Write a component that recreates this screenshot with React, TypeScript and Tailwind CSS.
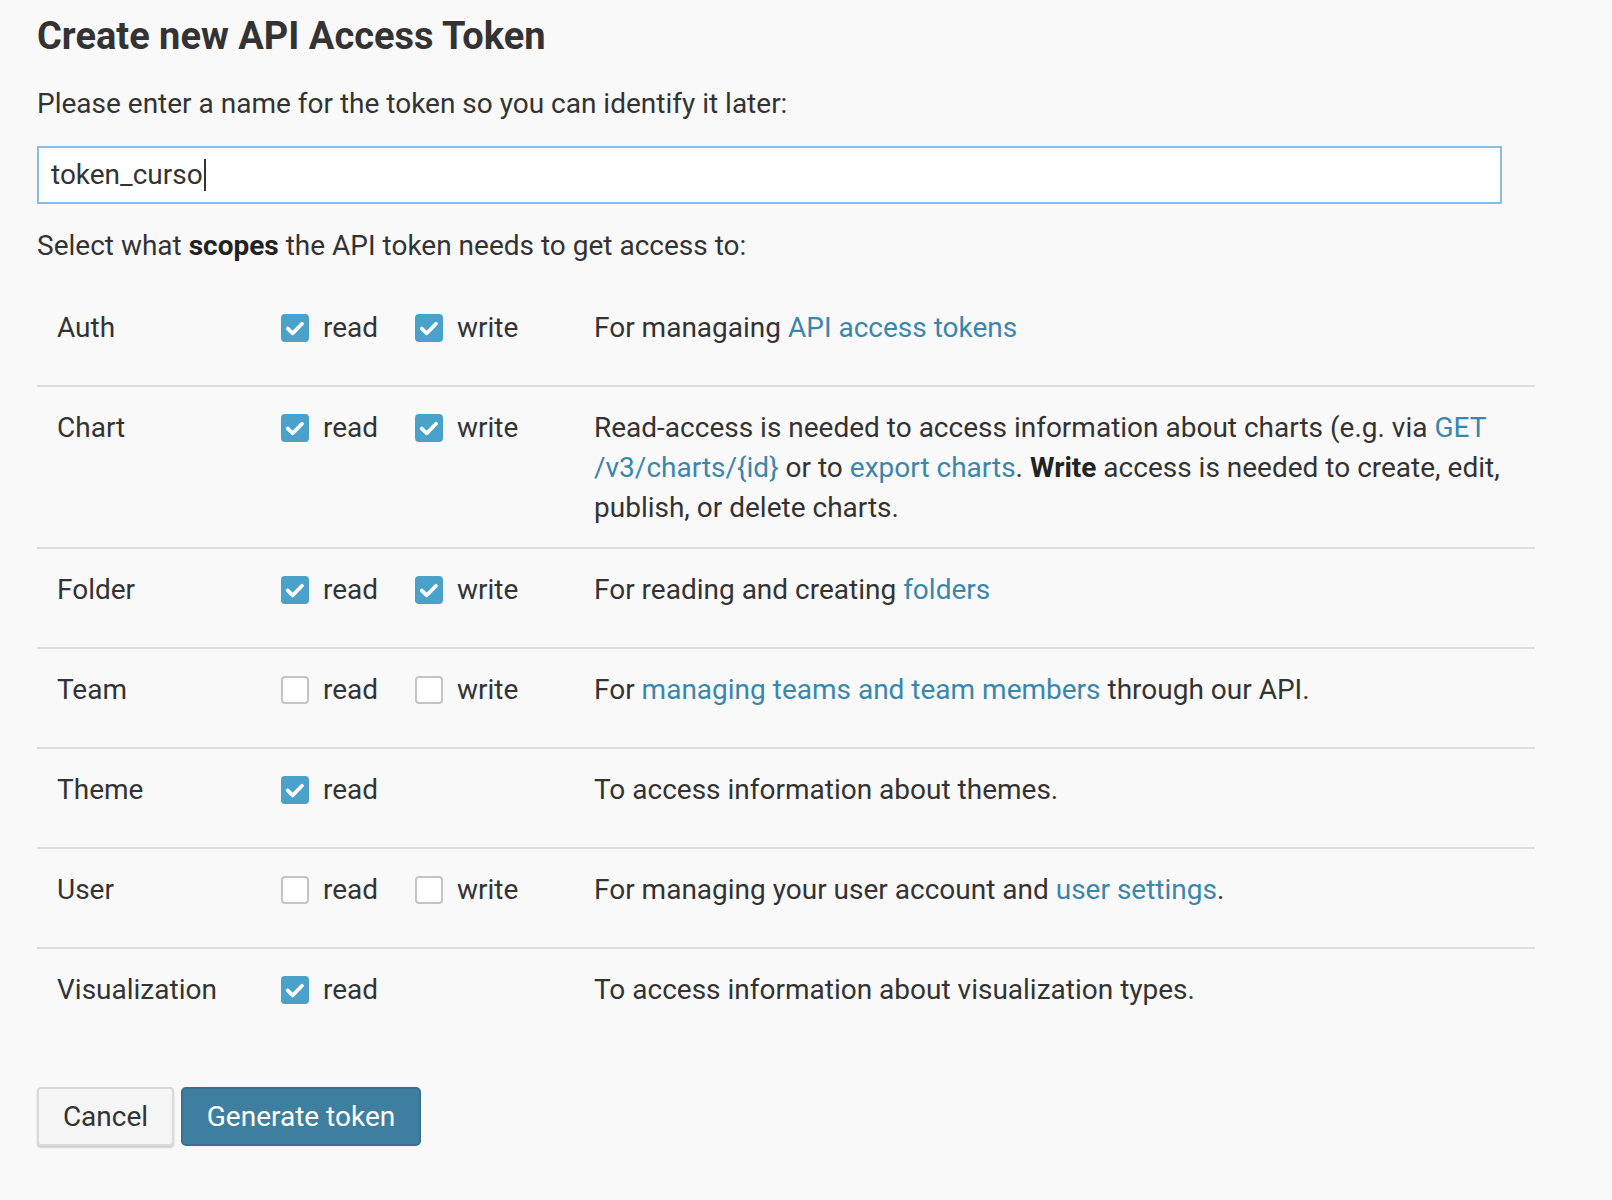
import React from "react";

const LINK = "text-[#3b86ad]";

function Box({ checked }: { checked: boolean }) {
  if (checked) {
    return (
      <span className="inline-flex h-[28px] w-[28px] shrink-0 items-center justify-center rounded-[4px] bg-[#4aa2cb]">
        <svg width="28" height="28" viewBox="0 0 28 28" fill="none">
          <path d="M6.8 14.6 L11.8 19.3 L21 9.8" stroke="white" strokeWidth="3.8" strokeLinecap="round" strokeLinejoin="round" />
        </svg>
      </span>
    );
  }
  return <span className="inline-block h-[28px] w-[28px] shrink-0 rounded-[4px] border-2 border-[#c4c4c4] bg-white" />;
}

function Check({ label, checked, w }: { label: string; checked: boolean; w: string }) {
  return (
    <label className={`flex items-center gap-[14px] ${w}`}>
      <Box checked={checked} />
      <span>{label}</span>
    </label>
  );
}

type Row = {
  name: string;
  read: boolean;
  write?: boolean;
  desc: React.ReactNode;
};

const rows: Row[] = [
  {
    name: "Auth",
    read: true,
    write: true,
    desc: (
      <>
        For managaing <a className={LINK}>API access tokens</a>
      </>
    ),
  },
  {
    name: "Chart",
    read: true,
    write: true,
    desc: (
      <>
        Read-access is needed to access information about charts (e.g. via <a className={LINK}>GET /v3/charts/{"{id}"}</a> or to{" "}
        <a className={LINK}>export charts</a>. <b className="font-bold text-[#222]">Write</b> access is needed to create, edit, publish, or delete charts.
      </>
    ),
  },
  {
    name: "Folder",
    read: true,
    write: true,
    desc: (
      <>
        For reading and creating <a className={LINK}>folders</a>
      </>
    ),
  },
  {
    name: "Team",
    read: false,
    write: false,
    desc: (
      <>
        For <a className={LINK}>managing teams and team members</a> through our API.
      </>
    ),
  },
  { name: "Theme", read: true, desc: <>To access information about themes.</> },
  {
    name: "User",
    read: false,
    write: false,
    desc: (
      <>
        For managing your user account and <a className={LINK}>user settings</a>.
      </>
    ),
  },
  { name: "Visualization", read: true, desc: <>To access information about visualization types.</> },
];

export default function App() {
  return (
    <div
      className="min-h-screen bg-[#f9f9f9] pl-[37px] pt-[13px] text-[#333]"
      style={{ fontFamily: "Roboto, 'Liberation Sans', sans-serif" }}
    >
      <h1 className="text-[38px] font-bold leading-[46px] text-[#333]">Create new API Access Token</h1>
      <p className="mt-[25px] text-[28px] leading-[40px]">Please enter a name for the token so you can identify it later:</p>
      <div className="mt-[22px] flex h-[58px] w-[1465px] items-center border-2 border-[#8abbe9] bg-white px-[12px] text-[28px]">
        <span>token_curso</span>
        <span className="ml-[1px] inline-block h-[32px] w-[2px] bg-[#333]" />
      </div>
      <p className="mt-[22px] text-[28px] leading-[40px]">
        Select what <b className="font-bold text-[#222]">scopes</b> the API token needs to get access to:
      </p>
      <div className="mt-[21px] w-[1498px] text-[28px] leading-[40px]">
        {rows.map((r, i) => (
          <div
            key={r.name}
            className={`grid min-h-[100px] grid-cols-[244px_313px_1fr] pb-[19px] pt-[21px] ${
              i < rows.length - 1 ? "border-b-2 border-[#dddddd]" : ""
            }`}
          >
            <div className="pl-[20px]">{r.name}</div>
            <div className="flex h-[40px] items-center">
              <Check label="read" checked={r.read} w="w-[134px]" />
              {r.write !== undefined && <Check label="write" checked={r.write} w="w-[140px]" />}
            </div>
            <div className="pr-[20px]">{r.desc}</div>
          </div>
        ))}
      </div>
      <div className="mt-[38px] flex gap-[7px] pb-[40px]">
        <button className="h-[59px] w-[137px] rounded-[4px] border-2 border-[#d9d9d9] bg-[#f5f5f5] text-[28px] text-[#333] shadow-[0_2px_2px_rgba(0,0,0,0.18)]">
          Cancel
        </button>
        <button className="h-[59px] w-[240px] rounded-[5px] border-2 border-[#37728f] bg-[#3e7f9f] text-[28px] text-white">
          Generate token
        </button>
      </div>
    </div>
  );
}
